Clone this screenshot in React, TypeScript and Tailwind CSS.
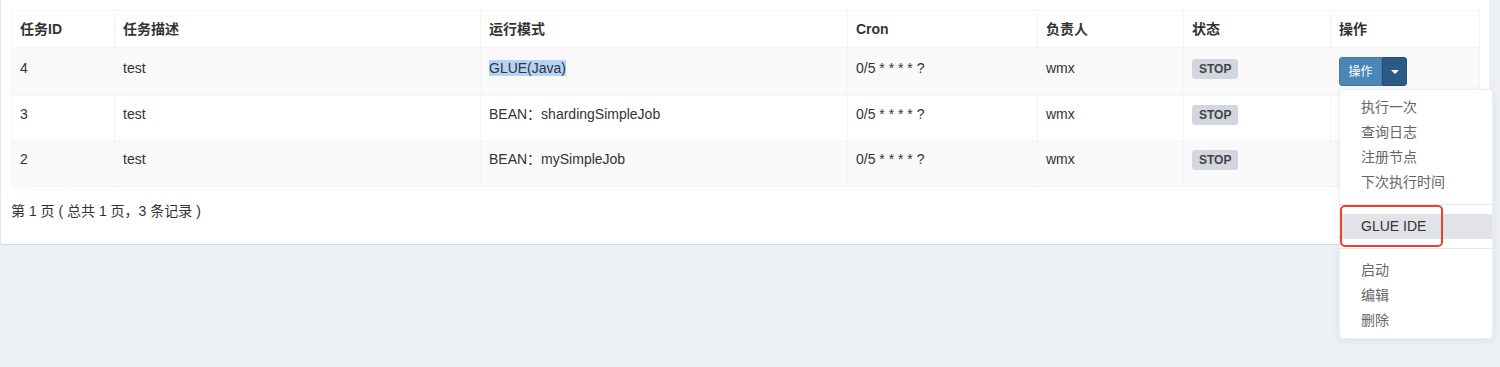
import React from 'react';

const FONT = { fontFamily: '"Liberation Sans", "Noto Sans CJK SC", sans-serif' };

type Job = { id: number; desc: string; mode: string; cron: string; owner: string; status: string };

const jobs: Job[] = [
  { id: 4, desc: 'test', mode: 'GLUE(Java)', cron: '0/5 * * * * ?', owner: 'wmx', status: 'STOP' },
  { id: 3, desc: 'test', mode: 'BEAN：shardingSimpleJob', cron: '0/5 * * * * ?', owner: 'wmx', status: 'STOP' },
  { id: 2, desc: 'test', mode: 'BEAN：mySimpleJob', cron: '0/5 * * * * ?', owner: 'wmx', status: 'STOP' },
];

const headers = ['任务ID', '任务描述', '运行模式', 'Cron', '负责人', '状态', '操作'];
const widths = ['w-[103px]', 'w-[366px]', 'w-[367px]', 'w-[190px]', 'w-[146px]', 'w-[147px]', 'w-[149px]'];
const rowHeights = ['h-[48px]', 'h-[45px]', 'h-[46px]'];

const MenuItem: React.FC<{ label: string; active?: boolean }> = ({ label, active }) => (
  <li className={`h-[25px] leading-[25px] px-[21px] text-[14px] ${active ? 'bg-[#e1e3e8] text-[#333]' : 'text-[#666]'}`}>{label}</li>
);

const Divider = () => <li className="h-px my-[9px] bg-[#e9e9e9]" />;

const OpsDropdown: React.FC = () => (
  <div className="relative inline-flex -mt-px">
    <button className="h-[29px] w-[43px] bg-[#4a87b9] text-white text-[12px] rounded-l-[3px] border border-[#4279a8]">操作</button>
    <button className="h-[29px] w-[25px] bg-[#2d5a85] rounded-r-[3px] border border-[#274f75] flex items-center justify-center">
      <span className="w-0 h-0 border-l-[4px] border-r-[4px] border-t-[4px] border-l-transparent border-r-transparent border-t-white" />
    </button>
    {/* opened menu */}
    <ul className="absolute left-0 top-[32px] w-[154px] bg-white rounded-[4px] border border-[#eceef1] shadow-[0_2px_8px_rgba(0,0,0,0.06)] py-[5px] z-10">
      <MenuItem label="执行一次" />
      <MenuItem label="查询日志" />
      <MenuItem label="注册节点" />
      <MenuItem label="下次执行时间" />
      <Divider />
      <MenuItem label="GLUE IDE" active />
      <Divider />
      <MenuItem label="启动" />
      <MenuItem label="编辑" />
      <MenuItem label="删除" />
    </ul>
    {/* annotation box */}
    <div className="absolute left-[1px] top-[148px] w-[103px] h-[42px] border-2 border-[#e5432f] rounded-[5px] z-20" />
  </div>
);

export default function App() {
  return (
    <div className="min-h-[367px] bg-[#ecf0f5] text-[#333]" style={FONT}>
      <div className="w-[1489px] bg-white rounded-b-[3px] shadow-[0_1px_1px_rgba(0,0,0,0.1)] border-l border-[#e4e7ec] px-[10px] pt-[10px] pb-[23px]">
        <table className="table-fixed border-collapse border border-[#f4f4f4] w-[1468px] text-[14px]">
          <thead>
            <tr className="h-[36px]">
              {headers.map((h, i) => (
                <th key={h} className={`${widths[i]} text-left font-bold px-[8px] py-[8px] leading-[20px] border border-[#f4f4f4]`}>
                  {h}
                </th>
              ))}
            </tr>
          </thead>
          <tbody>
            {jobs.map((job, idx) => {
              const cell = `align-top px-[8px] ${idx === 0 ? 'pt-[10px]' : 'pt-[8px]'} pb-[8px] leading-[20px] border border-[#f4f4f4]`;
              return (
                <tr key={job.id} className={`${rowHeights[idx]} ${idx % 2 === 0 ? 'bg-[#f9f9f9]' : 'bg-white'}`}>
                  <td className={cell}>{job.id}</td>
                  <td className={cell}>{job.desc}</td>
                  <td className={cell}>
                    {idx === 0 ? <span className="bg-[#b4d3f7]">{job.mode}</span> : job.mode}
                  </td>
                  <td className={cell}>{job.cron}</td>
                  <td className={cell}>{job.owner}</td>
                  <td className={cell}>
                    <span className="inline-block bg-[#d2d6de] text-[#444] font-bold text-[12px] leading-[20px] px-[7px] rounded-[3px]">{job.status}</span>
                  </td>
                  <td className={cell}>{idx === 0 ? <OpsDropdown /> : null}</td>
                </tr>
              );
            })}
          </tbody>
        </table>
        <div className="mt-[14px] text-[14px] leading-[20px]">第 1 页 ( 总共 1 页，3 条记录 )</div>
      </div>
    </div>
  );
}
